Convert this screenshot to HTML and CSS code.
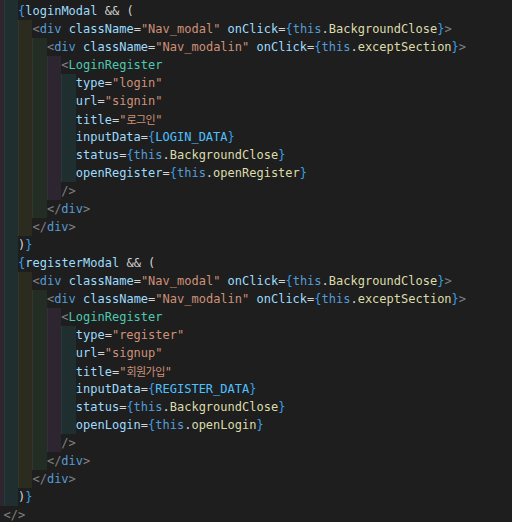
FILE: index.html
```html
<!DOCTYPE html>
<html lang="ko">
<head>
    <meta charset="UTF-8">
    <meta name="viewport" content="width=device-width, initial-scale=1.0">
    <title>Nav modal JSX</title>
    <link rel="stylesheet" href="styles.css">
</head>
<body>
    <div class="editor">
        <!-- tail of the line above, cut by the screenshot -->
        <div class="line top"><span class="ind edge"></span><span class="ind teal"></span></div>

        <!-- login modal -->
        <div class="line"><span class="ind edge"></span><span class="ind teal"></span><span class="code"><span class="br">{</span><span class="vr">loginModal</span> <span class="op">&amp;&amp; (</span></span></div>
        <div class="line"><span class="ind edge"></span><span class="ind teal"></span><span class="ind yellow"></span><span class="code"><span class="pn">&lt;</span><span class="tg">div</span> <span class="at">className</span><span class="op">=</span><span class="st">"Nav_modal"</span> <span class="at">onClick</span><span class="op">=</span><span class="br">{</span><span class="th">this</span><span class="op">.</span><span class="fn">BackgroundClose</span><span class="br">}</span><span class="pn">&gt;</span></span></div>
        <div class="line"><span class="ind edge"></span><span class="ind teal"></span><span class="ind yellow"></span><span class="ind green"></span><span class="code"><span class="pn">&lt;</span><span class="tg">div</span> <span class="at">className</span><span class="op">=</span><span class="st">"Nav_modalin"</span> <span class="at">onClick</span><span class="op">=</span><span class="br">{</span><span class="th">this</span><span class="op">.</span><span class="fn">exceptSection</span><span class="br">}</span><span class="pn">&gt;</span></span></div>
        <div class="line"><span class="ind edge"></span><span class="ind teal"></span><span class="ind yellow"></span><span class="ind green"></span><span class="ind pink"></span><span class="code"><span class="pn">&lt;</span><span class="cm">LoginRegister</span></span></div>
        <div class="line"><span class="ind edge"></span><span class="ind teal"></span><span class="ind yellow"></span><span class="ind green"></span><span class="ind pink"></span><span class="ind teal"></span><span class="code"><span class="at">type</span><span class="op">=</span><span class="st">"login"</span></span></div>
        <div class="line"><span class="ind edge"></span><span class="ind teal"></span><span class="ind yellow"></span><span class="ind green"></span><span class="ind pink"></span><span class="ind teal"></span><span class="code"><span class="at">url</span><span class="op">=</span><span class="st">"signin"</span></span></div>
        <div class="line"><span class="ind edge"></span><span class="ind teal"></span><span class="ind yellow"></span><span class="ind green"></span><span class="ind pink"></span><span class="ind teal"></span><span class="code"><span class="at">title</span><span class="op">=</span><span class="st">"<span class="ko">로그인</span>"</span></span></div>
        <div class="line"><span class="ind edge"></span><span class="ind teal"></span><span class="ind yellow"></span><span class="ind green"></span><span class="ind pink"></span><span class="ind teal"></span><span class="code"><span class="at">inputData</span><span class="op">=</span><span class="br">{</span><span class="cn">LOGIN_DATA</span><span class="br">}</span></span></div>
        <div class="line"><span class="ind edge"></span><span class="ind teal"></span><span class="ind yellow"></span><span class="ind green"></span><span class="ind pink"></span><span class="ind teal"></span><span class="code"><span class="at">status</span><span class="op">=</span><span class="br">{</span><span class="th">this</span><span class="op">.</span><span class="fn">BackgroundClose</span><span class="br">}</span></span></div>
        <div class="line"><span class="ind edge"></span><span class="ind teal"></span><span class="ind yellow"></span><span class="ind green"></span><span class="ind pink"></span><span class="ind teal"></span><span class="code"><span class="at">openRegister</span><span class="op">=</span><span class="br">{</span><span class="th">this</span><span class="op">.</span><span class="fn">openRegister</span><span class="br">}</span></span></div>
        <div class="line"><span class="ind edge"></span><span class="ind teal"></span><span class="ind yellow"></span><span class="ind green"></span><span class="ind pink"></span><span class="code"><span class="pn">/&gt;</span></span></div>
        <div class="line"><span class="ind edge"></span><span class="ind teal"></span><span class="ind yellow"></span><span class="ind green"></span><span class="code"><span class="pn">&lt;/</span><span class="tg">div</span><span class="pn">&gt;</span></span></div>
        <div class="line"><span class="ind edge"></span><span class="ind teal"></span><span class="ind yellow"></span><span class="code"><span class="pn">&lt;/</span><span class="tg">div</span><span class="pn">&gt;</span></span></div>
        <div class="line"><span class="ind edge"></span><span class="ind teal"></span><span class="code"><span class="op">)</span><span class="br">}</span></span></div>

        <!-- register modal -->
        <div class="line"><span class="ind edge"></span><span class="ind teal"></span><span class="code"><span class="br">{</span><span class="vr">registerModal</span> <span class="op">&amp;&amp; (</span></span></div>
        <div class="line"><span class="ind edge"></span><span class="ind teal"></span><span class="ind yellow"></span><span class="code"><span class="pn">&lt;</span><span class="tg">div</span> <span class="at">className</span><span class="op">=</span><span class="st">"Nav_modal"</span> <span class="at">onClick</span><span class="op">=</span><span class="br">{</span><span class="th">this</span><span class="op">.</span><span class="fn">BackgroundClose</span><span class="br">}</span><span class="pn">&gt;</span></span></div>
        <div class="line"><span class="ind edge"></span><span class="ind teal"></span><span class="ind yellow"></span><span class="ind green"></span><span class="code"><span class="pn">&lt;</span><span class="tg">div</span> <span class="at">className</span><span class="op">=</span><span class="st">"Nav_modalin"</span> <span class="at">onClick</span><span class="op">=</span><span class="br">{</span><span class="th">this</span><span class="op">.</span><span class="fn">exceptSection</span><span class="br">}</span><span class="pn">&gt;</span></span></div>
        <div class="line"><span class="ind edge"></span><span class="ind teal"></span><span class="ind yellow"></span><span class="ind green"></span><span class="ind pink"></span><span class="code"><span class="pn">&lt;</span><span class="cm">LoginRegister</span></span></div>
        <div class="line"><span class="ind edge"></span><span class="ind teal"></span><span class="ind yellow"></span><span class="ind green"></span><span class="ind pink"></span><span class="ind teal"></span><span class="code"><span class="at">type</span><span class="op">=</span><span class="st">"register"</span></span></div>
        <div class="line"><span class="ind edge"></span><span class="ind teal"></span><span class="ind yellow"></span><span class="ind green"></span><span class="ind pink"></span><span class="ind teal"></span><span class="code"><span class="at">url</span><span class="op">=</span><span class="st">"signup"</span></span></div>
        <div class="line"><span class="ind edge"></span><span class="ind teal"></span><span class="ind yellow"></span><span class="ind green"></span><span class="ind pink"></span><span class="ind teal"></span><span class="code"><span class="at">title</span><span class="op">=</span><span class="st">"<span class="ko">회원가입</span>"</span></span></div>
        <div class="line"><span class="ind edge"></span><span class="ind teal"></span><span class="ind yellow"></span><span class="ind green"></span><span class="ind pink"></span><span class="ind teal"></span><span class="code"><span class="at">inputData</span><span class="op">=</span><span class="br">{</span><span class="cn">REGISTER_DATA</span><span class="br">}</span></span></div>
        <div class="line"><span class="ind edge"></span><span class="ind teal"></span><span class="ind yellow"></span><span class="ind green"></span><span class="ind pink"></span><span class="ind teal"></span><span class="code"><span class="at">status</span><span class="op">=</span><span class="br">{</span><span class="th">this</span><span class="op">.</span><span class="fn">BackgroundClose</span><span class="br">}</span></span></div>
        <div class="line"><span class="ind edge"></span><span class="ind teal"></span><span class="ind yellow"></span><span class="ind green"></span><span class="ind pink"></span><span class="ind teal"></span><span class="code"><span class="at">openLogin</span><span class="op">=</span><span class="br">{</span><span class="th">this</span><span class="op">.</span><span class="fn">openLogin</span><span class="br">}</span></span></div>
        <div class="line"><span class="ind edge"></span><span class="ind teal"></span><span class="ind yellow"></span><span class="ind green"></span><span class="ind pink"></span><span class="code"><span class="pn">/&gt;</span></span></div>
        <div class="line"><span class="ind edge"></span><span class="ind teal"></span><span class="ind yellow"></span><span class="ind green"></span><span class="code"><span class="pn">&lt;/</span><span class="tg">div</span><span class="pn">&gt;</span></span></div>
        <div class="line"><span class="ind edge"></span><span class="ind teal"></span><span class="ind yellow"></span><span class="code"><span class="pn">&lt;/</span><span class="tg">div</span><span class="pn">&gt;</span></span></div>
        <div class="line"><span class="ind edge"></span><span class="ind teal"></span><span class="code"><span class="op">)</span><span class="br">}</span></span></div>

        <div class="line"><span class="ind edge blank"></span><span class="code"><span class="pn">&lt;/&gt;</span></span></div>
    </div>
</body>
</html>
```

FILE: styles.css
```css
html, body {
    margin: 0;
    padding: 0;
    background-color: #1e1e1e;
    overflow: hidden;
}
.editor {
    font-family: "DejaVu Sans Mono", "Noto Sans CJK KR", monospace;
    font-size: 12px;
    color: #d4d4d4;
}
.line {
    display: flex;
    height: 18px;
    line-height: 18px;
    overflow: hidden;
}
.line.top {
    height: 2px;
}

/* indent rainbow columns, two characters wide */
.ind {
    flex: none;
    width: 2ch;
    box-shadow: inset 1px 0 0 rgba(255, 255, 255, 0.05);
}
.ind.edge {
    width: 3.6px;
    background-color: #2d2530;
    box-shadow: none;
}
.ind.edge.blank {
    background-color: transparent;
}
.teal {
    background-color: #1f2e2f;
}
.yellow {
    background-color: #2c2b20;
}
.green {
    background-color: #242d24;
}
.pink {
    background-color: #2d2530;
}
.code {
    flex: none;
    white-space: pre;
}

/* syntax colours */
.pn { color: #808080; }
.tg { color: #569cd6; }
.at { color: #9cdcfe; }
.vr { color: #9cdcfe; }
.op { color: #d4d4d4; }
.st { color: #ce9178; }
.br { color: #389ee8; }
.th { color: #569cd6; }
.fn { color: #dcdcaa; }
.cm { color: #4ec9b0; }
.cn { color: #4fc1ff; }
.ko {
    font-family: "Noto Sans CJK KR", sans-serif;
    font-size: 11px;
    letter-spacing: -0.5px;
}
```
